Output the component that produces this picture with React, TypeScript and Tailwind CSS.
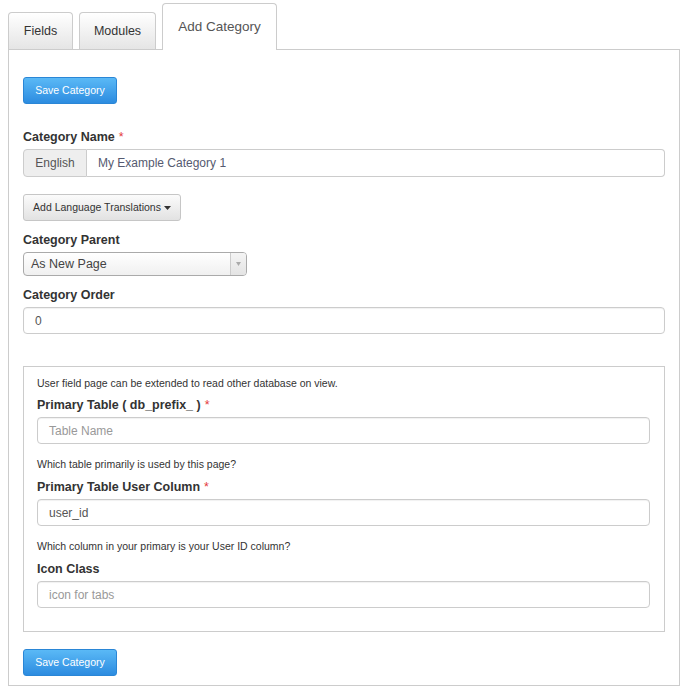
import React from "react";

const FONT = "font-['Liberation_Sans',Arial,sans-serif]";

function Req() {
  return <span className="ml-[4px] text-[#e4393c] font-normal">*</span>;
}

function Label({ text, req, className = "" }: { text: string; req?: boolean; className?: string }) {
  return (
    <div className={`h-[18px] leading-[18px] text-[12.5px] font-bold text-[#333] ${className}`}>
      {text}
      {req && <Req />}
    </div>
  );
}

function TextInput({ value, placeholder, className = "" }: { value?: string; placeholder?: string; className?: string }) {
  return (
    <div
      className={`h-[27px] border border-[#ccc] rounded-[4px] bg-white px-[11px] flex items-center text-[12px] shadow-[inset_0_1px_1px_rgba(0,0,0,0.06)] ${className}`}
    >
      {value ? <span className="text-[#555]">{value}</span> : <span className="text-[#999]">{placeholder}</span>}
    </div>
  );
}

function BlueButton({ className = "" }: { className?: string }) {
  return (
    <button className={`w-[94px] h-[27px] rounded-[3px] border border-[#2a86d6] bg-gradient-to-b from-[#5ab9f6] to-[#2c8ce0] text-white text-[10.5px] ${className}`}>
      Save Category
    </button>
  );
}

export default function App() {
  return (
    <div className={`w-[687px] h-[695px] bg-white pt-[3px] pl-[8px] pr-[7px] ${FONT}`}>
      {/* Tabs */}
      <div className="relative z-10 flex items-end gap-[6px] h-[47px]">
        <div className="mb-px w-[65px] h-[37px] border border-b-0 border-[#ccc] rounded-t-[4px] bg-gradient-to-b from-white to-[#e5e5e5] flex items-center justify-center text-[12.5px] text-[#333]">
          Fields
        </div>
        <div className="mb-px w-[77px] h-[37px] border border-b-0 border-[#ccc] rounded-t-[4px] bg-gradient-to-b from-white to-[#e5e5e5] flex items-center justify-center text-[12.5px] text-[#333]">
          Modules
        </div>
        <div className="w-[115px] h-[47px] border border-b-0 border-[#ccc] rounded-t-[4px] bg-white flex justify-center pt-[13px] text-[13.5px] text-[#555]">
          Add Category
        </div>
      </div>

      {/* Panel */}
      <div className="-mt-px border border-[#ccc] pt-[27px] px-[14px] pb-[9px]">
        <BlueButton />

        <Label text="Category Name" req className="mt-[24px]" />
        <div className="mt-[3px] flex h-[28px]">
          <div className="w-[64px] border border-[#ccc] rounded-l-[4px] bg-[#eee] flex items-center justify-center text-[12px] text-[#555]">
            English
          </div>
          <div className="flex-1 border border-l-0 border-[#ccc] rounded-r-[4px] bg-white flex items-center pl-[11px] text-[12px] text-[#555a70]">
            My Example Category 1
          </div>
        </div>

        <button className="mt-[17px] h-[27px] w-[158px] rounded-[3px] border border-[#c6c6c6] bg-gradient-to-b from-[#fbfbfb] to-[#e2e2e2] text-[10.5px] text-[#333] flex items-center justify-center gap-[3px]">
          Add Language Translations
          <svg width="7" height="4" viewBox="0 0 7 4" className="mt-px">
            <path d="M0 0H7L3.5 4Z" fill="#333" />
          </svg>
        </button>

        <Label text="Category Parent" className="mt-[10px]" />
        <div className="mt-[3px] w-[224px] h-[24px] border border-[#aaa] rounded-[4px] bg-gradient-to-b from-white to-[#f0f0f0] flex">
          <div className="flex-1 pl-[7px] flex items-center text-[12.5px] text-[#444]">As New Page</div>
          <div className="w-[16px] border-l border-[#ccc] bg-gradient-to-b from-[#f4f4f4] to-[#e4e4e4] rounded-r-[3px] flex items-center justify-center">
            <svg width="5" height="4" viewBox="0 0 5 4">
              <path d="M0 0H5L2.5 4Z" fill="#aaa" />
            </svg>
          </div>
        </div>

        <Label text="Category Order" className="mt-[10px]" />
        <TextInput value="0" className="mt-[3px] h-[26px]" />

        {/* Extended box */}
        <div className="mt-[32px] border border-[#ccc] pt-[9px] pl-[13px] pr-[14px] pb-[23px]">
          <div className="h-[15px] leading-[15px] text-[10.5px] text-[#333]">
            User field page can be extended to read other database on view.
          </div>
          <Label text="Primary Table ( db_prefix_ )" req className="mt-[5px]" />
          <TextInput placeholder="Table Name" className="mt-[3px]" />

          <div className="mt-[13px] h-[15px] leading-[15px] text-[10.5px] text-[#333]">
            Which table primarily is used by this page?
          </div>
          <Label text="Primary Table User Column" req className="mt-[6px]" />
          <TextInput value="user_id" className="mt-[3px]" />

          <div className="mt-[13px] h-[15px] leading-[15px] text-[10.5px] text-[#333]">
            Which column in your primary is your User ID column?
          </div>
          <Label text="Icon Class" className="mt-[6px]" />
          <TextInput placeholder="icon for tabs" className="mt-[3px]" />
        </div>

        <BlueButton className="mt-[17px] block" />
      </div>
    </div>
  );
}
